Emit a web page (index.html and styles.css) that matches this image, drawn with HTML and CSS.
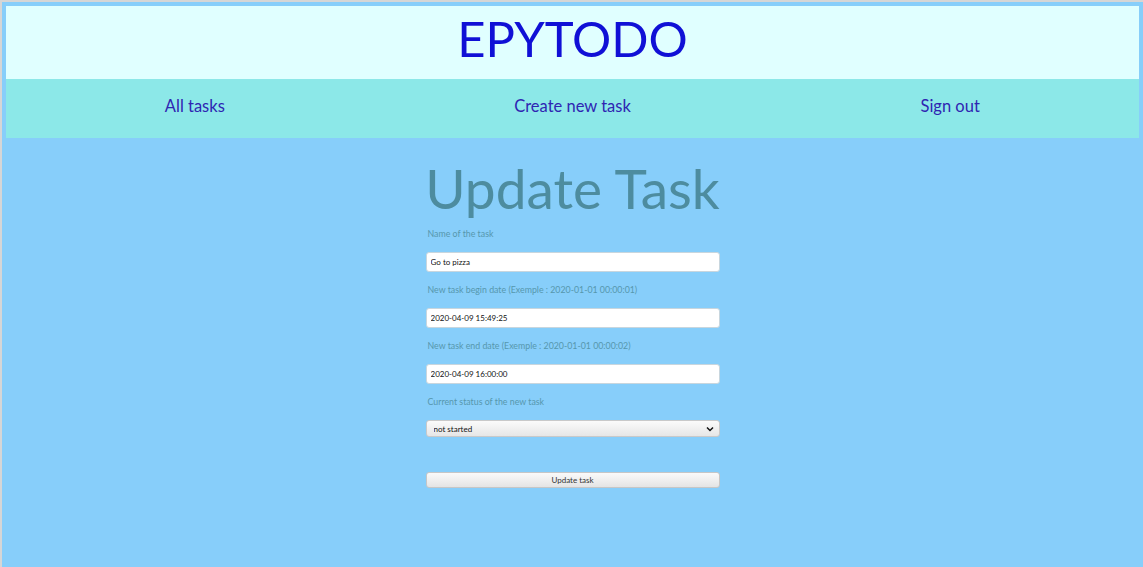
FILE: index.html
```html
<!DOCTYPE html>
<html lang="en">
<head>
<meta charset="utf-8">
<title>EPYTODO</title>
<link rel="stylesheet" href="styles.css">
</head>
<body>
<div class="frame">
<div class="page">
  <header class="banner">
    <div class="brand">EPYTODO</div>
    <nav class="nav">
      <a class="nav-link" href="#">All tasks</a>
      <a class="nav-link" href="#">Create new task</a>
      <a class="nav-link" href="#">Sign out</a>
    </nav>
  </header>
  <main class="main">
    <h1 class="title">Update Task</h1>
    <form class="form">
      <label class="label">Name of the task</label>
      <input class="field" type="text" value="Go to pizza">
      <label class="label">New task begin date (Exemple : 2020-01-01 00:00:01)</label>
      <input class="field" type="text" value="2020-04-09 15:49:25">
      <label class="label">New task end date (Exemple : 2020-01-01 00:00:02)</label>
      <input class="field" type="text" value="2020-04-09 16:00:00">
      <label class="label">Current status of the new task</label>
      <div class="select-wrap">
        <select class="select">
          <option>not started</option>
          <option>in progress</option>
          <option>done</option>
        </select>
        <svg class="chevron" width="8" height="6" viewBox="0 0 8 6"><path d="M1 1.5 L4 4.5 L7 1.5" fill="none" stroke="#111" stroke-width="1.5"/></svg>
      </div>
      <button class="button" type="button">Update task</button>
    </form>
  </main>
</div>
</div>
</body>
</html>
```
FILE: styles.css
```css
html, body {
  margin: 0;
  padding: 0;
  height: 100%;
}
body {
  font-family: Lato, "Open Sans", sans-serif;
  background: #87cefa;
  overflow: hidden;
}
.frame {
  min-height: 100vh;
  box-sizing: border-box;
  border-top: 2px solid #d6d6d6;
  border-left: 2px solid #d6d6d6;
}
.page {
  padding: 4px 4px 0 4px;
}
.banner {
  display: flex;
  flex-direction: column;
}
.brand {
  background: #e0ffff;
  height: 73px;
  box-sizing: border-box;
  padding-bottom: 8px;
  display: flex;
  align-items: center;
  justify-content: center;
  font-size: 49px;
  color: #1010d6;
  line-height: 1;
}
.nav {
  background: #8ce8e8;
  height: 59px;
  box-sizing: border-box;
  padding-bottom: 5px;
  display: flex;
  align-items: center;
}
.nav-link {
  flex: 1;
  text-align: center;
  color: #2f25b2;
  text-decoration: none;
  font-size: 16.5px;
}
.main {
  display: flex;
  flex-direction: column;
  align-items: center;
}
.title {
  margin: 18px 0 8px;
  font-size: 55px;
  line-height: 64px;
  font-weight: 400;
  color: #4d8c9f;
}
.form {
  width: 294px;
  display: flex;
  flex-direction: column;
}
.label {
  font-size: 8.8px;
  line-height: 12px;
  color: #5697ad;
  padding-left: 2px;
  margin-bottom: 12px;
}
.field {
  height: 20px;
  box-sizing: border-box;
  border: 1px solid #c8d6de;
  border-radius: 3px;
  background: #fff;
  font-family: Lato, sans-serif;
  font-size: 8px;
  color: #111;
  padding: 0 4px;
  margin: 0 0 12px;
  outline: none;
}
.select-wrap {
  position: relative;
  height: 17px;
}
.select {
  display: block;
  appearance: none;
  -webkit-appearance: none;
  width: 100%;
  height: 17px;
  box-sizing: border-box;
  border: 1px solid #c9c9c9;
  border-radius: 3px;
  background: linear-gradient(#fbfbfb, #e6e6e6);
  font-family: Lato, sans-serif;
  font-size: 8px;
  color: #111;
  padding: 0 7px;
  margin: 0;
  outline: none;
}
.chevron {
  position: absolute;
  right: 6px;
  top: 6px;
  pointer-events: none;
}
.button {
  margin-top: 35px;
  height: 16px;
  box-sizing: border-box;
  border: 1px solid #c6c6c6;
  border-radius: 3px;
  background: linear-gradient(#fafafa, #e4e4e4);
  font-family: Lato, sans-serif;
  font-size: 8px;
  color: #333;
  padding: 0;
}
```
